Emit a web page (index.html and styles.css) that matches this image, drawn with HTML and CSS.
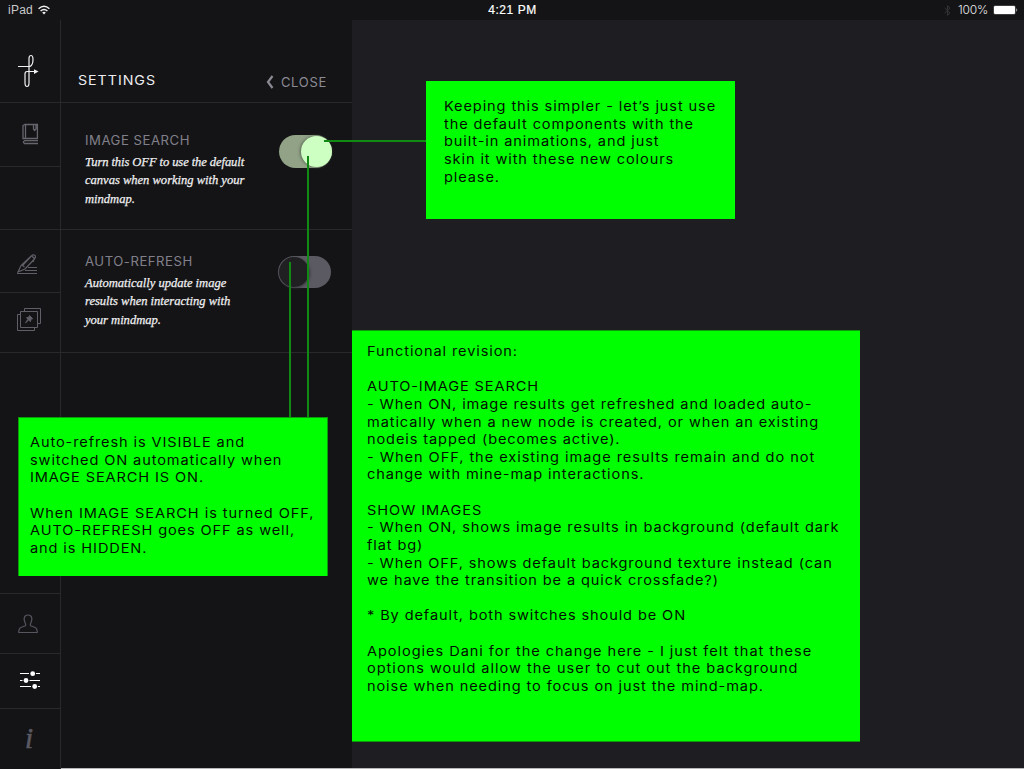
FILE: index.html
```html
<!DOCTYPE html>
<html lang="en">
<head>
<meta charset="utf-8">
<title>Settings</title>
<link rel="stylesheet" href="styles.css">
</head>
<body>
<div class="app">
  <header class="status">
    <div class="status-left"><span class="device">iPad</span>
      <svg class="wifi" width="12" height="10" viewBox="0 0 12 10" fill="none" stroke="#f0f0f0" stroke-width="1.5"><path d="M.6 3.7Q6 -1.2 11.4 3.7M2.6 6Q6 2.9 9.4 6"/><path d="M4.2 7.6Q6 6 7.8 7.6L6 9.5Z" fill="#f0f0f0" stroke="none"/></svg>
    </div>
    <div class="clock">4:21 PM</div>
    <div class="status-right">
      <svg class="bluetooth" width="7" height="11" viewBox="0 0 7 11" fill="none" stroke="#343438"><path d="M.7 3L6 8 3.5 10.3V.7L6 3 .7 8"/></svg>
      <span class="charge">100%</span>
      <svg width="25" height="10" viewBox="0 0 25 10"><rect x=".5" y=".5" width="22" height="9" rx="1.5" fill="none" stroke="#3c3c3e"/><rect x="1" y="1" width="21" height="8" rx="1" fill="#fff"/><path d="M23.500 3q1.500 2 0 4z" fill="#fff"/></svg>
    </div>
  </header>
  <div class="main">
    <nav class="rail">
      <div class="cell cell-logo"><svg width="22" height="34" viewBox="0 0 22 34" fill="none" stroke="#f0f0f2" stroke-width="1.2"><path d="M1 12.500H13Q16 11 16 5.500C16 2.800 15.500 1.500 14 1.500S12 2.800 12 4.500V28.500Q12 32.500 10 32.500T8 28.500V20Q8 17.500 10 17.500H18"/><path d="M17 15.200L21.500 17.500 17 20Z" fill="#f0f0f2" stroke="none"/></svg></div>
      <div class="cell cell-book"><svg width="17" height="22" viewBox="0 0 17 22" fill="none" stroke="#66656e" stroke-width="1.300"><path d="M3.500 15V1.500H15.400V15.500H1V2.500L3.500 1M11.500 1.500V6L12.500 7.500 14 6V1.500M2 17.700H16M2 20.500H16M2.500 17.700Q.2 19 2.500 20.500"/></svg></div>
      <div class="cell cell-blank"></div>
      <div class="cell cell-pen"><svg width="21" height="21" viewBox="0 0 21 21" fill="none" stroke="#605f68" stroke-width="1.200"><path d="M1 18L4 11.500 14.500 1.800Q16 .3 17.700 1.300T17.500 5L8 15 1 18ZM14.800 2L17.600 4.700M13.500 3L5.500 11.500 7.500 13M15.500 6L17 7.500"/><path stroke-width="1" d="M11 13.500H20M8 16.500H20M0 19.500H20"/></svg></div>
      <div class="cell cell-pins"><svg width="24" height="23" viewBox="0 0 24 23" fill="none" stroke="#605f68"><path d="M3.500 6.500H.5V22.500H17.500V19.500M7.500 3.500V.5H23.500V15.500H20.500M3.500 3.500H20.500V19.500H3.500Z"/><path d="M12.500 7.500L15.700 10.700 14 11 13.500 13.500 11.700 12 8.500 14.800 11 11.200 9.500 9.700 12 9.200Z" fill="#605f68"/></svg></div>
      <div class="cell cell-gap"></div>
      <div class="cell cell-user"><svg width="20" height="20" viewBox="0 0 20 20" fill="none" stroke="#57565f" stroke-width="1.200"><path d="M.8 18.500Q.5 14 4 13L7.300 11.800Q8.300 11 7 8.500C5.800 6 5.300 1 10 1S14.200 6 13 8.500Q11.700 11 12.700 11.800L16 13Q19.500 14 19.200 18.500Z"/></svg></div>
      <div class="cell cell-sliders"><svg width="20" height="18" viewBox="0 0 20 18" fill="#fff"><path d="M0 2h9v1H0zM16 2h4v1h-4zM0 9h2.500v1H0zM9.500 9H20v1H9.500zM0 15h11v1H0zM18 15h2v1h-2z"/><circle cx="12.700" cy="2.700" r="2.400"/><circle cx="6" cy="9.500" r="2.400"/><circle cx="14.700" cy="15.500" r="2.400"/></svg></div>
      <div class="cell cell-info"><span class="info">i</span></div>
    </nav>
    <section class="panel">
      <div class="panel-head"><h1 class="title">SETTINGS</h1>
        <div class="close"><svg width="8" height="14" viewBox="0 0 8 14" fill="none" stroke="#8b8a94" stroke-width="2.200"><path d="M6.500 1L2 7 6.500 13"/></svg><span>CLOSE</span></div>
      </div>
      <div class="option option-search">
        <div class="copy"><h2 class="label">IMAGE SEARCH</h2><p class="desc"><span class="snug">Turn this OFF to use the default</span><br>canvas when working with your<br>mindmap.</p></div>
        <div class="toggle on"><i class="knob"></i></div>
      </div>
      <div class="option option-refresh">
        <div class="copy"><h2 class="label">AUTO-REFRESH</h2><p class="desc">Automatically update image<br>results when interacting with<br>your mindmap.</p></div>
        <div class="toggle off"><i class="knob"></i></div>
      </div>
    </section>
    <section class="canvas"></section>
  </div>
  <div class="wire wire-h"></div>
  <div class="wire wire-search"></div>
  <div class="wire wire-refresh"></div>
  <aside class="note note-top"><p class="note-text">Keeping this simpler - let’s just use<br>the default components with the<br>built-in animations, and just<br>skin it with these new colours<br>please.</p></aside>
  <aside class="note note-left"><p class="note-text">Auto-refresh is VISIBLE and<br>switched ON automatically when<br>IMAGE SEARCH IS ON.<br><br><span class="loose">When IMAGE SEARCH is turned OFF,</span><br>AUTO-REFRESH goes OFF as well,<br>and is HIDDEN.</p></aside>
  <aside class="note note-main"><p class="note-text">Functional revision:<br><br>AUTO-IMAGE SEARCH<br>- When ON, image results get refreshed and loaded auto-<br>matically when a new node is created, or when an existing<br>nodeis tapped (becomes active).<br><span class="loose">- When OFF, the existing image results remain and do not</span><br>change with mine-map interactions.<br><br>SHOW IMAGES<br>- When ON, shows image results in background (default dark<br>flat bg)<br>- When OFF, shows default background texture instead (can<br>we have the transition be a quick crossfade?)<br><br>* By default, both switches should be ON<br><br><span class="loose">Apologies Dani for the change here - I just felt that these</span><br><span class="looser">options would allow the user to cut out the background</span><br>noise when needing to focus on just the mind-map.</p></aside>
</div>
</body>
</html>
```
FILE: styles.css
```css
* { box-sizing: border-box; }
body { margin: 0; background: #1e1d21; font-family: Inter, sans-serif; color: #e8e8ea; }
h1, h2, p { margin: 0; font-weight: 400; }
svg { display: block; }
.app { position: relative; width: 1024px; height: 769px; overflow: hidden; display: flex; flex-direction: column; }
.status { height: 20px; background: #141416; display: grid; grid-template-columns: 1fr auto 1fr; align-items: center; padding: 0 6px 0 8px; font-size: 12px; line-height: 20px; }
.status-left { display: flex; align-items: center; gap: 5px; }
.device { font-family: "Liberation Sans", sans-serif; letter-spacing: .25px; color: #c8c8ca; }
.clock { font-family: "Liberation Sans", sans-serif; letter-spacing: .55px; color: #fff; -webkit-text-stroke: .2px #fff; margin-right: 1px; }
.status-right { display: flex; align-items: center; justify-content: flex-end; gap: 5px; }
.charge { font-weight: 300; letter-spacing: -.2px; margin-left: 2px; }
.main { flex: 1; display: flex; }
.rail { width: 61px; background: #141416; border-right: 1px solid #29292c; display: flex; flex-direction: column; }
.cell { border-bottom: 1px solid #29292c; display: flex; }
.cell-logo { height: 83px; padding: 34px 0 0 17px; }
.cell-book { height: 64px; padding: 20px 0 0 22px; }
.cell-blank { height: 63px; }
.cell-pen { height: 63px; padding: 24px 0 0 17px; }
.cell-pins { height: 60px; padding: 15px 0 0 17px; }
.cell-gap { height: 241px; }
.cell-user { height: 60px; padding: 20px 0 0 18px; }
.cell-sliders { height: 55px; padding: 17px 0 0 20px; }
.cell-info { flex: 1; border-bottom: 0; padding: 14px 0 0 25px; }
.info { font: italic 29px/30px "Liberation Serif", serif; color: #5b5a63; -webkit-text-stroke: .6px #5b5a63; }
.panel { width: 291px; background: #141416; border-bottom: 1px solid #b8b8ba; }
.panel-head { height: 83px; border-bottom: 1px solid #29292c; display: flex; justify-content: space-between; padding: 50px 25px 0 17px; }
.title { font-size: 13.3px; line-height: 20px; letter-spacing: .9px; color: #ececf0; transform: scaleX(1.07); transform-origin: left; }
.close { display: flex; align-items: center; gap: 7px; height: 20px; margin-top: 2px; font-size: 13px; letter-spacing: .7px; color: #8b8a94; }
.option { border-bottom: 1px solid #29292c; display: flex; justify-content: space-between; padding: 29px 20px 0 24px; }
.option-search { height: 127px; }
.option-refresh { height: 123px; padding: 23px 21px 0 24px; }
.label { font-size: 12.4px; line-height: 17px; letter-spacing: .5px; color: #81808a; transform: scaleX(1.06); transform-origin: left; }
.desc { font: italic 12.6px/18.300px "Liberation Serif", serif; letter-spacing: -.03px; color: #f0f0f2; -webkit-text-stroke: .25px #f0f0f2; margin-top: 4px; }
.snug { letter-spacing: -.1px; }
.toggle { width: 53px; height: 32px; border-radius: 16px; display: flex; align-items: center; padding: 1px; }
.knob { width: 31px; height: 31px; border-radius: 50%; }
.on { height: 33px; border-radius: 17px; background: #91a287; justify-content: flex-end; margin-top: 3px; padding: 0; }
.on .knob { background: #ceffc2; box-shadow: -1px 0 3px #5b6a55; }
.off { background: #5b5a62; margin-top: 3px; }
.off .knob { width: 30px; height: 30px; background: #202023; box-shadow: 1px 1px 3px #38373d; }
.canvas { flex: 1; border-bottom: 1px solid #b8b8ba; }
.wire { position: absolute; background: #118a13; }
.wire-h { left: 324px; top: 140px; width: 102px; height: 2px; }
.wire-search { left: 307px; top: 156px; width: 2px; height: 262px; }
.wire-refresh { left: 289px; top: 262px; width: 2px; height: 156px; }
.note { position: absolute; background: #0f0; color: #001000; font-size: 13px; line-height: 17.630px; white-space: nowrap; }
.note-text { transform: scaleX(1.12); transform-origin: left top; width: max-content; letter-spacing: .8px; }
.loose { letter-spacing: .85px; }
.looser { letter-spacing: .88px; }
.note-top { left: 426px; top: 81px; width: 309px; height: 138px; padding: 17px 0 0 18px; }
.note-left { left: 18px; top: 417px; width: 310px; height: 159px; padding: 16px 0 0 11px; border: 1px solid #0b9b0b; border-bottom: 0; }
.note-main { left: 352px; top: 330px; width: 508px; height: 412px; padding: 12px 0 0 15px; border: solid #0b9b0b; border-width: 1px 0; }
```
